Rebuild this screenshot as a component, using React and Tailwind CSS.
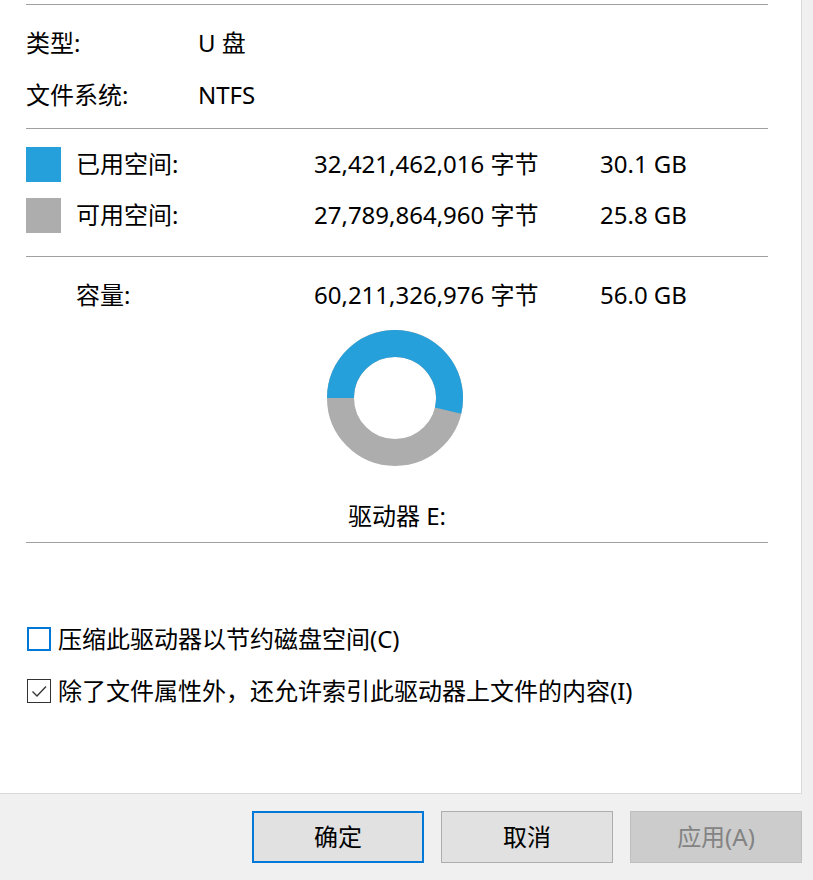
import React from "react";

const font = { fontFamily: '"Noto Sans", "Noto Sans CJK SC", sans-serif' };

function Line() {
  return <div className="h-px w-[742px] bg-[#a0a0a0]" />;
}

function Donut() {
  const c = 68;
  const r = 54.5;
  const a = (13.5 * Math.PI) / 180;
  const ex = c + r * Math.cos(a);
  const ey = c + r * Math.sin(a);
  return (
    <svg width="136" height="136" viewBox="0 0 136 136">
      <circle cx={c} cy={c} r={r} fill="none" stroke="#adadad" strokeWidth="27" />
      <path
        d={`M ${c - r} ${c} A ${r} ${r} 0 1 1 ${ex} ${ey}`}
        fill="none"
        stroke="#26a0da"
        strokeWidth="27"
      />
    </svg>
  );
}

export default function App() {
  return (
    <div
      className="w-[813px] h-[880px] bg-[#f0f0f0] flex flex-col text-[24px] text-black leading-none"
      style={font}
    >
      <div className="w-[802px] h-[794px] bg-white border-r border-b border-[#d9d9d9] flex flex-col pl-[26px] pt-[4px]">
        <Line />
        <div className="flex items-center h-[52px] mt-[12px]">
          <span className="w-[172px]">类型:</span>
          <span>U 盘</span>
        </div>
        <div className="flex items-center h-[52px]">
          <span className="w-[172px]">文件系统:</span>
          <span>NTFS</span>
        </div>
        <div className="mt-[7px]">
          <Line />
        </div>
        <div className="flex items-center h-[51px] mt-[10px]">
          <div className="w-[35px] h-[35px] bg-[#26a0da]" />
          <span className="ml-[15px] w-[238px] mb-[2px]">已用空间:</span>
          <span className="w-[286px] mb-[2px]">32,421,462,016 字节</span>
          <span className="mb-[2px]">30.1 GB</span>
        </div>
        <div className="flex items-center h-[51px]">
          <div className="w-[35px] h-[35px] bg-[#adadad]" />
          <span className="ml-[15px] w-[238px] mb-[2px]">可用空间:</span>
          <span className="w-[286px] mb-[2px]">27,789,864,960 字节</span>
          <span className="mb-[2px]">25.8 GB</span>
        </div>
        <div className="mt-[15px]">
          <Line />
        </div>
        <div className="flex items-center h-[51px] mt-[12px]">
          <span className="ml-[50px] w-[238px]">容量:</span>
          <span className="w-[286px]">60,211,326,976 字节</span>
          <span>56.0 GB</span>
        </div>
        <div className="w-[742px] flex flex-col items-center">
          <div className="mt-[10px] ml-[-4px]">
            <Donut />
          </div>
          <div className="h-[50px] mt-[25px] flex items-center">驱动器 E:</div>
        </div>
        <div className="mt-[1px]">
          <Line />
        </div>
        <div className="flex items-center h-[52px] mt-[70px]">
          <div className="w-[24px] h-[24px] border-2 border-[#0078d7] ml-[1px]" />
          <span className="ml-[7px]">压缩此驱动器以节约磁盘空间(C)</span>
        </div>
        <div className="flex items-center h-[52px]">
          <div className="w-[24px] h-[24px] border-[1.5px] border-[#333333] ml-[1px] flex items-center justify-center">
            <svg width="18" height="18" viewBox="0 0 18 18">
              <path d="M2.5 9.5 L7 14 L16 4.5" fill="none" stroke="#333333" strokeWidth="1.3" />
            </svg>
          </div>
          <span className="ml-[7px]">除了文件属性外，还允许索引此驱动器上文件的内容(I)</span>
        </div>
      </div>
      <div className="flex mt-[17px] ml-[252px] gap-[17px]">
        <div className="w-[172px] h-[52px] bg-[#e1e1e1] border-2 border-[#0078d7] flex items-center justify-center">
          确定
        </div>
        <div className="w-[172px] h-[52px] bg-[#e1e1e1] border border-[#adadad] flex items-center justify-center">
          取消
        </div>
        <div className="w-[172px] h-[52px] bg-[#cccccc] border border-[#bfbfbf] flex items-center justify-center text-[#838383]">
          应用(A)
        </div>
      </div>
    </div>
  );
}
